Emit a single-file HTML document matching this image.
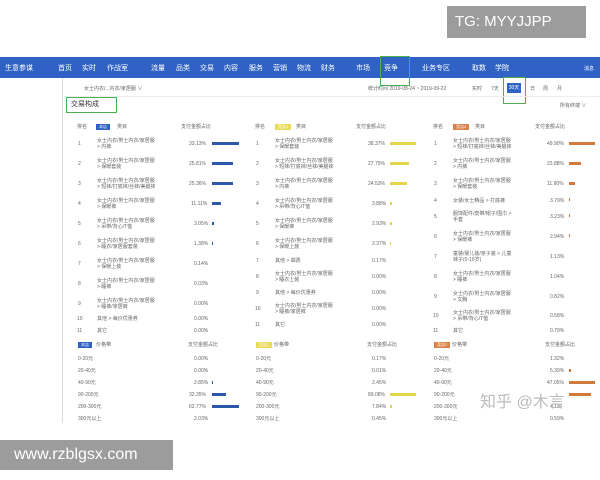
<!DOCTYPE html>
<html><head><meta charset="utf-8"><style>
*{margin:0;padding:0;box-sizing:border-box}
body{width:600px;height:480px;background:#fff;position:relative;overflow:hidden;font-family:"Liberation Sans","Noto Sans CJK SC",sans-serif;color:#555}
.a{position:absolute;white-space:nowrap}
.nav{position:absolute;left:0;top:57px;width:600px;height:21px;background:#2f62c4}
.nav span{position:absolute;top:6px;color:#fff;font-size:7px}
.t{font-size:5px;color:#666;position:absolute;white-space:nowrap;line-height:6px}
.b{position:absolute;height:3px}
.bl{background:#2b58a8}.ye{background:#e3d44a}.or{background:#d27a3e}
.tag{position:absolute;font-size:4px;color:#fff;padding:0 3px;height:6px;line-height:6px}
</style></head><body>
<div class="a" style="left:447px;top:6px;width:139px;height:32px;background:#9c9c9c;color:#fff;font-size:15px;line-height:32px;padding-left:8px">TG: MYYJJPP</div>
<div class="nav">
<span style="left:5px">生意参谋</span><span style="left:58px">首页</span><span style="left:82px">实时</span><span style="left:107px">作战室</span>
<span style="left:151px">流量</span><span style="left:176px">品类</span><span style="left:200px">交易</span><span style="left:224px">内容</span><span style="left:249px">服务</span><span style="left:273px">营销</span><span style="left:297px">物流</span><span style="left:321px">财务</span><span style="left:356px">市场</span><span style="left:384px">竞争</span><span style="left:422px">业务专区</span><span style="left:472px">取数</span><span style="left:495px">学院</span><span style="left:584px;font-size:5px;top:8px">消息</span>
</div>
<div class="a" style="left:380px;top:56px;width:30px;height:30px;border:1px solid #4caf50"></div>
<div class="a" style="left:62px;top:78px;width:1px;height:345px;background:#ddd"></div>
<div class="t" style="left:84px;top:86px">女士内衣/...内衣/家居服 ∨</div>
<div class="t" style="left:368px;top:86px">统计时间 2019-08-24 ~ 2019-09-22</div>
<div class="t" style="left:472px;top:86px">实时</div><div class="t" style="left:491px;top:86px">7天</div>
<div class="a" style="left:507px;top:83px;width:14px;height:10px;background:#2f62c4;color:#fff;font-size:5px;line-height:10px;text-align:center">30天</div>
<div class="t" style="left:530px;top:86px">日</div><div class="t" style="left:543px;top:86px">周</div><div class="t" style="left:557px;top:86px">月</div>
<div class="a" style="left:503px;top:77px;width:23px;height:27px;border:1px solid #4caf50"></div>
<div class="a" style="left:64px;top:96px;width:536px;height:1px;background:#eee"></div>
<div class="a" style="left:66px;top:97px;width:51px;height:16px;border:1px solid #4caf50;font-size:7px;color:#333;line-height:14px;padding-left:4px">交易构成</div>
<div class="t" style="left:560px;top:103px">所有终端 ∨</div>

<!-- headers -->
<div class="t" style="left:77px;top:124px">排名</div><div class="tag" style="left:96px;top:124px;background:#2f62c4">本店</div><div class="t" style="left:117px;top:124px">类目</div><div class="t" style="left:181px;top:124px">支付金额占比</div>
<div class="t" style="left:255px;top:124px">排名</div><div class="tag" style="left:275px;top:124px;background:#e8dc5a">竞店1</div><div class="t" style="left:296px;top:124px">类目</div><div class="t" style="left:356px;top:124px">支付金额占比</div>
<div class="t" style="left:433px;top:124px">排名</div><div class="tag" style="left:453px;top:124px;background:#d9814a">竞店2</div><div class="t" style="left:475px;top:124px">类目</div><div class="t" style="left:535px;top:124px">支付金额占比</div>

<!-- col1 -->
<div class="t" style="left:78px;top:141px">1</div><div class="t" style="left:97px;top:138px">女士内衣/男士内衣/家居服<br>&gt; 内裤</div><div class="t" style="left:189px;top:141px">33.13%</div><div class="b bl" style="left:212px;top:142px;width:27px"></div>
<div class="t" style="left:78px;top:161px">2</div><div class="t" style="left:97px;top:158px">女士内衣/男士内衣/家居服<br>&gt; 保暖套装</div><div class="t" style="left:189px;top:161px">25.81%</div><div class="b bl" style="left:212px;top:162px;width:21px"></div>
<div class="t" style="left:78px;top:181px">3</div><div class="t" style="left:97px;top:178px">女士内衣/男士内衣/家居服<br>&gt; 短袜/打底袜/丝袜/美腿袜</div><div class="t" style="left:189px;top:181px">25.36%</div><div class="b bl" style="left:212px;top:182px;width:21px"></div>
<div class="t" style="left:78px;top:201px">4</div><div class="t" style="left:97px;top:198px">女士内衣/男士内衣/家居服<br>&gt; 保暖裤</div><div class="t" style="left:191px;top:201px">11.11%</div><div class="b bl" style="left:212px;top:202px;width:9px"></div>
<div class="t" style="left:78px;top:221px">5</div><div class="t" style="left:97px;top:218px">女士内衣/男士内衣/家居服<br>&gt; 吊带/背心/T恤</div><div class="t" style="left:194px;top:221px">3.05%</div><div class="b bl" style="left:212px;top:222px;width:2px"></div>
<div class="t" style="left:78px;top:241px">6</div><div class="t" style="left:97px;top:238px">女士内衣/男士内衣/家居服<br>&gt; 睡衣/家居服套装</div><div class="t" style="left:194px;top:241px">1.38%</div><div class="b bl" style="left:212px;top:242px;width:1px"></div>
<div class="t" style="left:78px;top:261px">7</div><div class="t" style="left:97px;top:258px">女士内衣/男士内衣/家居服<br>&gt; 保暖上装</div><div class="t" style="left:194px;top:261px">0.14%</div>
<div class="t" style="left:78px;top:281px">8</div><div class="t" style="left:97px;top:278px">女士内衣/男士内衣/家居服<br>&gt; 睡裤</div><div class="t" style="left:194px;top:281px">0.03%</div>
<div class="t" style="left:78px;top:301px">9</div><div class="t" style="left:97px;top:298px">女士内衣/男士内衣/家居服<br>&gt; 睡裤/家居裤</div><div class="t" style="left:194px;top:301px">0.00%</div>
<div class="t" style="left:77px;top:316px">10</div><div class="t" style="left:97px;top:316px">其他 &gt; 每价优惠券</div><div class="t" style="left:194px;top:316px">0.00%</div>
<div class="t" style="left:77px;top:328px">11</div><div class="t" style="left:97px;top:328px">其它</div><div class="t" style="left:194px;top:328px">0.00%</div>

<!-- col2 -->
<div class="t" style="left:256px;top:141px">1</div><div class="t" style="left:275px;top:138px">女士内衣/男士内衣/家居服<br>&gt; 保暖套装</div><div class="t" style="left:368px;top:141px">38.37%</div><div class="b ye" style="left:390px;top:142px;width:26px"></div>
<div class="t" style="left:256px;top:161px">2</div><div class="t" style="left:275px;top:158px">女士内衣/男士内衣/家居服<br>&gt; 短袜/打底袜/丝袜/美腿袜</div><div class="t" style="left:368px;top:161px">27.75%</div><div class="b ye" style="left:390px;top:162px;width:19px"></div>
<div class="t" style="left:256px;top:181px">3</div><div class="t" style="left:275px;top:178px">女士内衣/男士内衣/家居服<br>&gt; 内裤</div><div class="t" style="left:368px;top:181px">24.53%</div><div class="b ye" style="left:390px;top:182px;width:17px"></div>
<div class="t" style="left:256px;top:201px">4</div><div class="t" style="left:275px;top:198px">女士内衣/男士内衣/家居服<br>&gt; 吊带/背心/T恤</div><div class="t" style="left:372px;top:201px">3.88%</div><div class="b ye" style="left:390px;top:202px;width:2px"></div>
<div class="t" style="left:256px;top:221px">5</div><div class="t" style="left:275px;top:218px">女士内衣/男士内衣/家居服<br>&gt; 保暖裤</div><div class="t" style="left:372px;top:221px">2.93%</div><div class="b ye" style="left:390px;top:222px;width:2px"></div>
<div class="t" style="left:256px;top:241px">6</div><div class="t" style="left:275px;top:238px">女士内衣/男士内衣/家居服<br>&gt; 保暖上装</div><div class="t" style="left:372px;top:241px">2.37%</div><div class="b ye" style="left:390px;top:242px;width:1px"></div>
<div class="t" style="left:256px;top:258px">7</div><div class="t" style="left:275px;top:258px">其他 &gt; 邮费</div><div class="t" style="left:372px;top:258px">0.17%</div>
<div class="t" style="left:256px;top:274px">8</div><div class="t" style="left:275px;top:271px">女士内衣/男士内衣/家居服<br>&gt; 睡衣上装</div><div class="t" style="left:372px;top:274px">0.00%</div>
<div class="t" style="left:256px;top:290px">9</div><div class="t" style="left:275px;top:290px">其他 &gt; 每价优惠券</div><div class="t" style="left:372px;top:290px">0.00%</div>
<div class="t" style="left:255px;top:306px">10</div><div class="t" style="left:275px;top:303px">女士内衣/男士内衣/家居服<br>&gt; 睡裤/家居裤</div><div class="t" style="left:372px;top:306px">0.00%</div>
<div class="t" style="left:255px;top:322px">11</div><div class="t" style="left:275px;top:322px">其它</div><div class="t" style="left:372px;top:322px">0.00%</div>

<!-- col3 -->
<div class="t" style="left:434px;top:141px">1</div><div class="t" style="left:453px;top:138px">女士内衣/男士内衣/家居服<br>&gt; 短袜/打底袜/丝袜/美腿袜</div><div class="t" style="left:547px;top:141px">49.90%</div><div class="b or" style="left:569px;top:142px;width:26px"></div>
<div class="t" style="left:434px;top:161px">2</div><div class="t" style="left:453px;top:158px">女士内衣/男士内衣/家居服<br>&gt; 内裤</div><div class="t" style="left:547px;top:161px">23.88%</div><div class="b or" style="left:569px;top:162px;width:12px"></div>
<div class="t" style="left:434px;top:181px">3</div><div class="t" style="left:453px;top:178px">女士内衣/男士内衣/家居服<br>&gt; 保暖套装</div><div class="t" style="left:547px;top:181px">11.90%</div><div class="b or" style="left:569px;top:182px;width:6px"></div>
<div class="t" style="left:434px;top:198px">4</div><div class="t" style="left:453px;top:198px">女装/女士精品 &gt; 打底裤</div><div class="t" style="left:550px;top:198px">3.79%</div><div class="b or" style="left:569px;top:198px;width:1px"></div>
<div class="t" style="left:434px;top:214px">5</div><div class="t" style="left:453px;top:211px">服饰配件/皮带/帽子/围巾 &gt;<br>手套</div><div class="t" style="left:550px;top:214px">3.23%</div><div class="b or" style="left:569px;top:214px;width:1px"></div>
<div class="t" style="left:434px;top:234px">6</div><div class="t" style="left:453px;top:231px">女士内衣/男士内衣/家居服<br>&gt; 保暖裤</div><div class="t" style="left:550px;top:234px">2.94%</div><div class="b or" style="left:569px;top:234px;width:1px"></div>
<div class="t" style="left:434px;top:254px">7</div><div class="t" style="left:453px;top:251px">童装/婴儿装/亲子装 &gt; 儿童<br>袜子(0-16岁)</div><div class="t" style="left:550px;top:254px">1.13%</div>
<div class="t" style="left:434px;top:274px">8</div><div class="t" style="left:453px;top:271px">女士内衣/男士内衣/家居服<br>&gt; 睡裤</div><div class="t" style="left:550px;top:274px">1.04%</div>
<div class="t" style="left:434px;top:294px">9</div><div class="t" style="left:453px;top:291px">女士内衣/男士内衣/家居服<br>&gt; 文胸</div><div class="t" style="left:550px;top:294px">0.82%</div>
<div class="t" style="left:433px;top:313px">10</div><div class="t" style="left:453px;top:310px">女士内衣/男士内衣/家居服<br>&gt; 吊带/背心/T恤</div><div class="t" style="left:550px;top:313px">0.58%</div>
<div class="t" style="left:433px;top:328px">11</div><div class="t" style="left:453px;top:328px">其它</div><div class="t" style="left:550px;top:328px">0.79%</div>

<!-- price section -->
<div class="tag" style="left:78px;top:342px;background:#2f62c4">本店</div><div class="t" style="left:96px;top:342px">价格带</div><div class="t" style="left:188px;top:342px">支付金额占比</div>
<div class="tag" style="left:256px;top:342px;background:#e8dc5a">竞店1</div><div class="t" style="left:274px;top:342px">价格带</div><div class="t" style="left:367px;top:342px">支付金额占比</div>
<div class="tag" style="left:434px;top:342px;background:#d9814a">竞店2</div><div class="t" style="left:452px;top:342px">价格带</div><div class="t" style="left:545px;top:342px">支付金额占比</div>

<div class="t" style="left:78px;top:356px">0-20元</div><div class="t" style="left:194px;top:356px">0.00%</div><div class="t" style="left:256px;top:356px">0-20元</div><div class="t" style="left:372px;top:356px">0.17%</div><div class="t" style="left:434px;top:356px">0-20元</div><div class="t" style="left:550px;top:356px">1.32%</div>
<div class="t" style="left:78px;top:368px">20-40元</div><div class="t" style="left:194px;top:368px">0.00%</div><div class="t" style="left:256px;top:368px">20-40元</div><div class="t" style="left:372px;top:368px">0.01%</div><div class="t" style="left:434px;top:368px">20-40元</div><div class="t" style="left:550px;top:368px">5.39%</div><div class="b or" style="left:569px;top:369px;width:2px"></div>
<div class="t" style="left:78px;top:380px">40-90元</div><div class="t" style="left:194px;top:380px">2.85%</div><div class="b bl" style="left:212px;top:381px;width:1px"></div><div class="t" style="left:256px;top:380px">40-90元</div><div class="t" style="left:372px;top:380px">2.45%</div><div class="t" style="left:434px;top:380px">40-90元</div><div class="t" style="left:547px;top:380px">47.05%</div><div class="b or" style="left:569px;top:381px;width:26px"></div>
<div class="t" style="left:78px;top:392px">90-200元</div><div class="t" style="left:189px;top:392px">32.35%</div><div class="b bl" style="left:212px;top:393px;width:14px"></div><div class="t" style="left:256px;top:392px">90-200元</div><div class="t" style="left:368px;top:392px">89.08%</div><div class="b ye" style="left:390px;top:393px;width:26px"></div><div class="t" style="left:434px;top:392px">90-200元</div><div class="b or" style="left:569px;top:393px;width:22px"></div>
<div class="t" style="left:78px;top:404px">200-300元</div><div class="t" style="left:189px;top:404px">62.77%</div><div class="b bl" style="left:212px;top:405px;width:27px"></div><div class="t" style="left:256px;top:404px">200-300元</div><div class="t" style="left:372px;top:404px">7.84%</div><div class="b ye" style="left:390px;top:405px;width:2px"></div><div class="t" style="left:434px;top:404px">200-300元</div><div class="t" style="left:550px;top:404px">4.1%</div>
<div class="t" style="left:78px;top:416px">300元以上</div><div class="t" style="left:194px;top:416px">2.03%</div><div class="t" style="left:256px;top:416px">300元以上</div><div class="t" style="left:372px;top:416px">0.45%</div><div class="t" style="left:434px;top:416px">300元以上</div><div class="t" style="left:550px;top:416px">0.59%</div>
<div class="a" style="left:480px;top:388px;font-size:16px;color:#bbb">知乎 @木言</div>

<div class="a" style="left:0;top:440px;width:173px;height:30px;background:#9c9c9c;color:#fff;font-size:16px;line-height:30px;padding-left:14px">www.rzblgsx.com</div>
</body></html>
